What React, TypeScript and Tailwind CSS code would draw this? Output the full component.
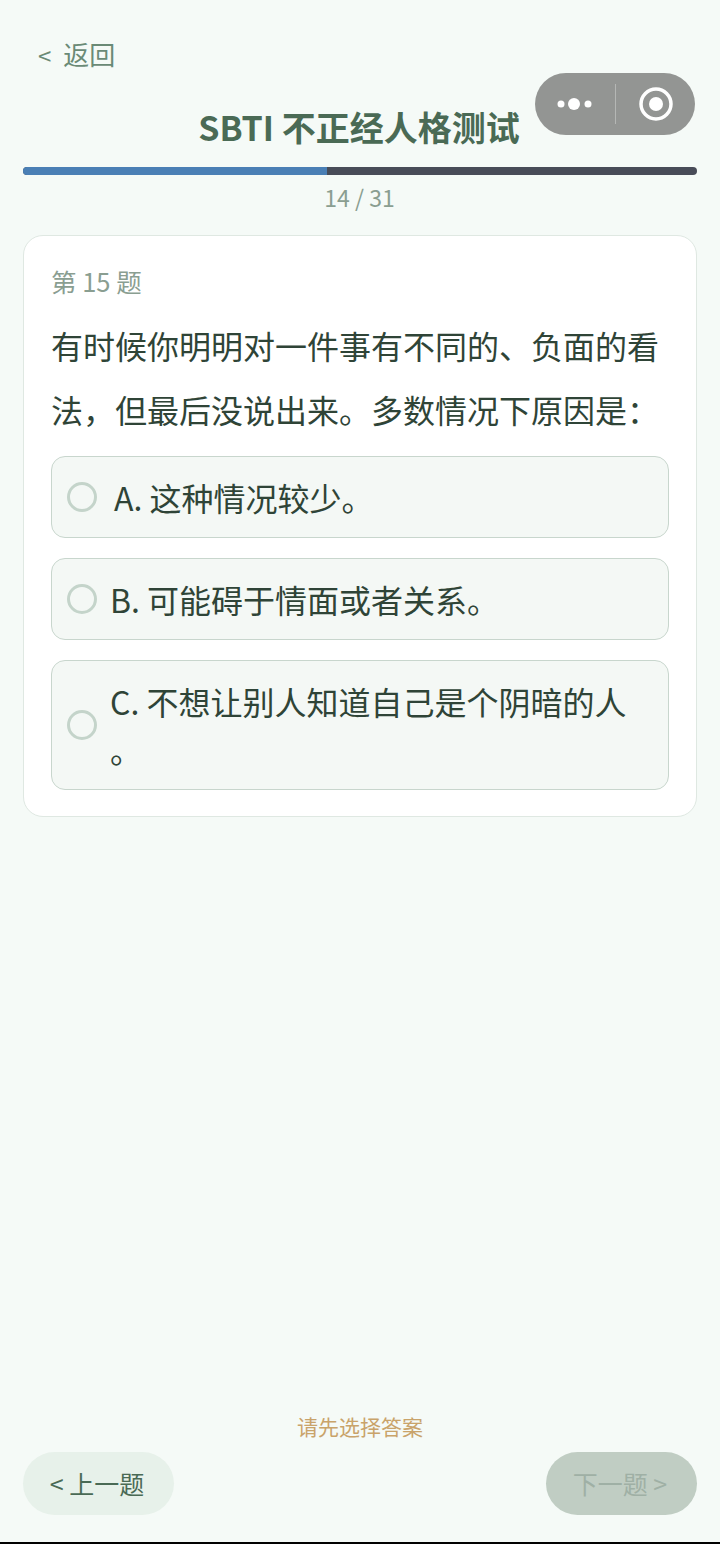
const options = [
  { key: "a", text: "A. 这种情况较少。", shift: "ml-[4px]" },
  { key: "b", text: "B. 可能碍于情面或者关系。", shift: "ml-0" },
  { key: "c", text: "C. 不想让别人知道自己是个阴暗的人", tail: "。", shift: "ml-0" },
];

export default function App() {
  return (
    <div
      className="relative flex h-[1544px] w-[720px] flex-col overflow-hidden bg-[#f5faf7] px-[23px]"
      style={{ fontFamily: '"Noto Sans CJK SC", "Noto Sans", sans-serif' }}
    >
      <div className="pl-[15px] pt-[35px] text-[26px] leading-[38px] text-[#6a8a76]">
        <span className="mr-[12px] text-[24px]">&lt;</span>返回
      </div>
      <h1 className="mt-[15px] pr-[2px] pt-[16px] text-center text-[34px] font-bold leading-[44px] text-[#4a6a55]">
        SBTI 不正经人格测试
      </h1>
      <div className="mt-[18px] h-[8px] w-full overflow-hidden rounded-full bg-[#484c58]">
        <div className="h-full w-[304px] bg-[#4a7fb5]" />
      </div>
      <div className="mt-[6px] pr-[1px] text-center text-[23px] leading-[32px] text-[#8a9e91]">14 / 31</div>
      <section className="mt-[22px] rounded-[20px] border border-[#dfe8e2] bg-white px-[27px] pb-[26px] pt-[26px]">
        <div className="text-[25.5px] leading-[38px] text-[#8a9e91]">第 15 题</div>
        <p className="mt-[13px] text-[32px] leading-[64px] text-[#2f4437]">
          有时候你明明对一件事有不同的、负面的看法，但最后没说出来。多数情况下原因是：
        </p>
        <div className="mt-[15px] flex flex-col gap-[20px]">
          {options.map((o) => (
            <div
              key={o.key}
              className="flex items-center gap-[13px] rounded-[14px] border border-[#c8d6cd] bg-[#f4f8f5] py-[16px] pl-[15px] pr-[30px]"
            >
              <span className="h-[30px] w-[30px] shrink-0 rounded-full border-[3px] border-[#c4d4ca]" />
              <span className={`${o.shift} text-[32px] leading-[48px] text-[#2f4437]`}>
                {o.text}
                {o.tail && (
                  <>
                    <br />
                    {o.tail}
                  </>
                )}
              </span>
            </div>
          ))}
        </div>
      </section>
      <div className="mt-auto text-center text-[21px] leading-[30px] text-[#c9a36a]">请先选择答案</div>
      <div className="mt-[11px] flex justify-between pb-[29px]">
        <button className="h-[63px] w-[151px] rounded-full bg-[#e7f1ea] pr-[3px] text-[25px] text-[#4a6a55]">
          &lt; 上一题
        </button>
        <button className="h-[63px] w-[151px] rounded-full bg-[#c0cdc3] pr-[3px] text-[25px] text-[#9fb0a5]">
          下一题 &gt;
        </button>
      </div>
      <div className="absolute inset-x-0 bottom-0 h-[2px] bg-black" />
      <div className="absolute left-[535px] top-[73px] flex h-[62px] w-[160px] items-center rounded-full bg-[#939593]">
        <svg width="80" height="62" viewBox="0 0 80 62">
          <circle cx="26" cy="31" r="3.5" fill="#fff" />
          <circle cx="39" cy="31" r="6" fill="#fff" />
          <circle cx="53" cy="31" r="3.5" fill="#fff" />
        </svg>
        <span className="h-[40px] w-[1px] bg-[#b5b7b5]" />
        <svg width="79" height="62" viewBox="0 0 79 62">
          <circle cx="40" cy="31" r="15" fill="none" stroke="#fff" strokeWidth="3.5" />
          <circle cx="40" cy="31" r="7" fill="#fff" />
        </svg>
      </div>
    </div>
  );
}
